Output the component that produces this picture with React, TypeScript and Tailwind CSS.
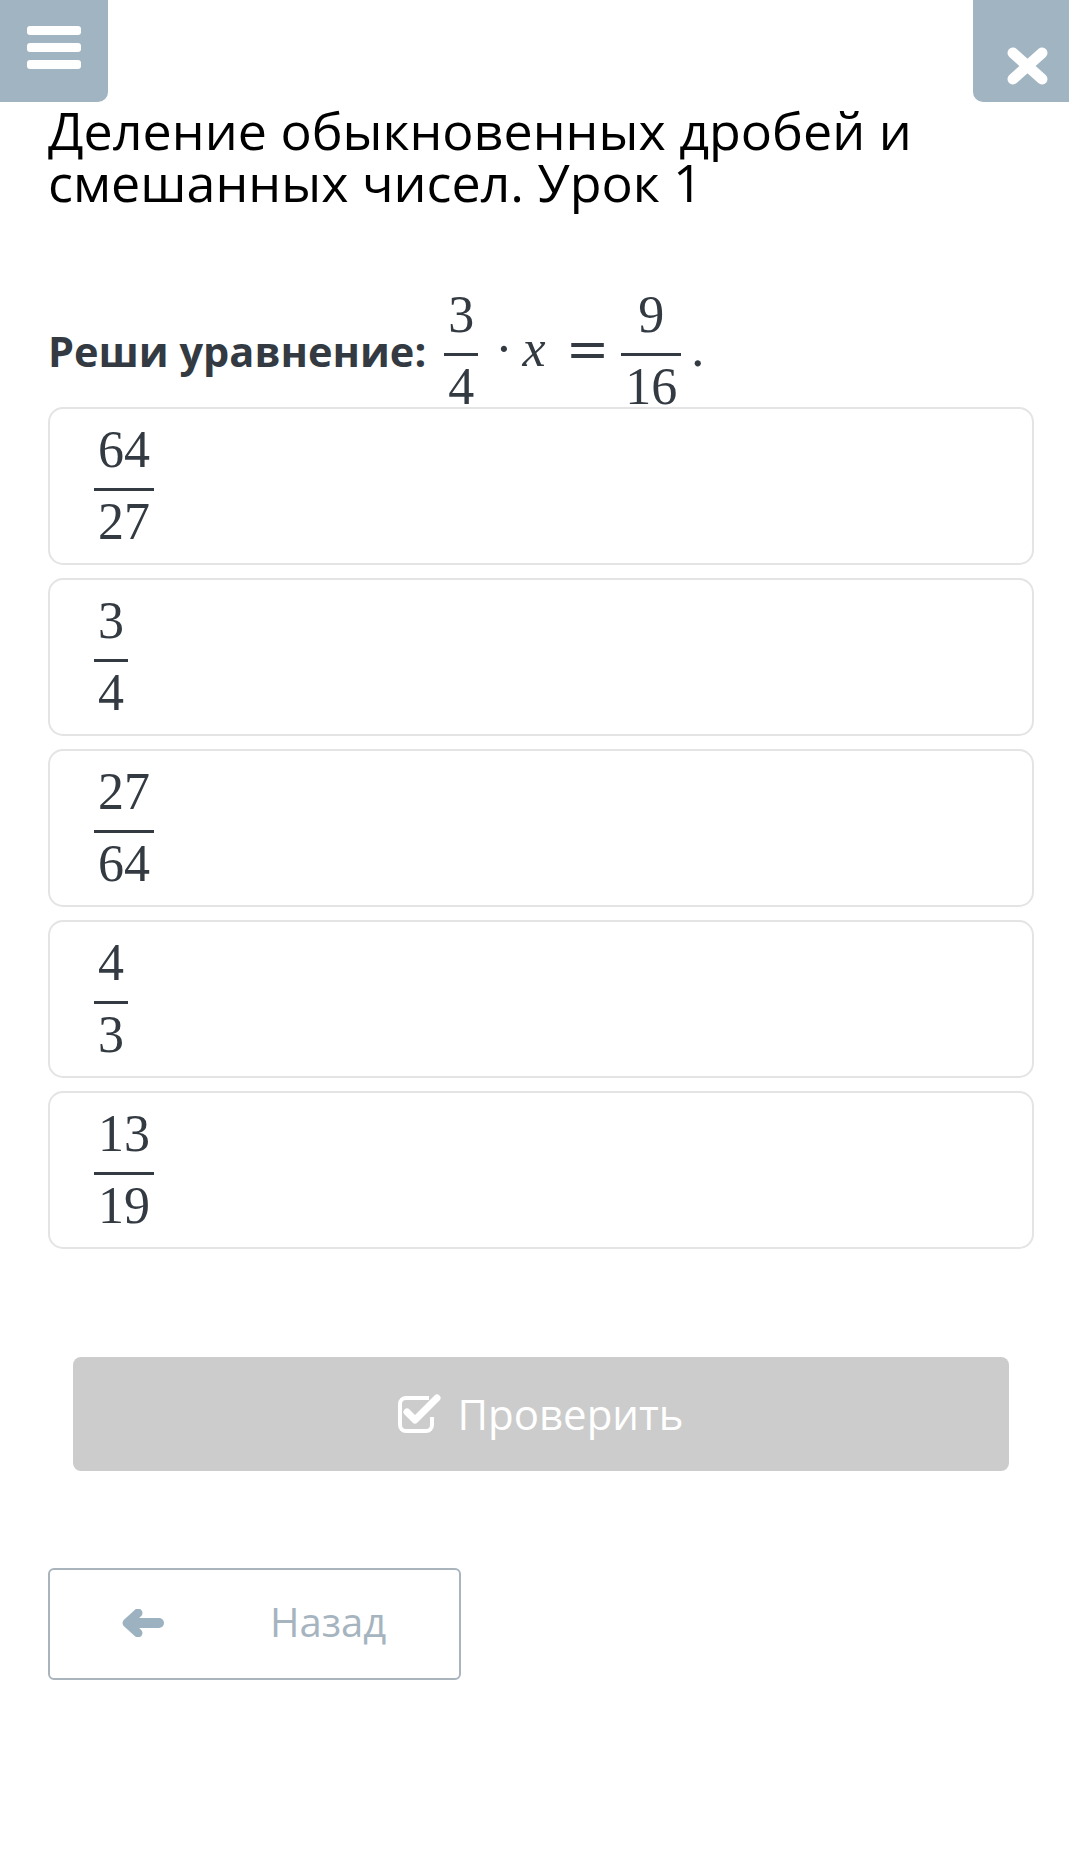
import React from "react";

function Frac({ n, d }: { n: string; d: string }) {
  return (
    <span className="inline-flex flex-col items-stretch">
      <span className="block h-[40px] px-[4px] text-center leading-[40px]">{n}</span>
      <span className="mb-[11px] mt-[18px] block h-[3px] bg-[#333a42]" />
      <span className="block h-[40px] px-[4px] text-center leading-[40px]">{d}</span>
    </span>
  );
}

const options: [string, string][] = [
  ["64", "27"],
  ["3", "4"],
  ["27", "64"],
  ["4", "3"],
  ["13", "19"],
];

export default function App() {
  return (
    <div className="min-h-[1866px] w-full bg-white font-['Open_Sans',sans-serif]">
      {/* header */}
      <div className="flex justify-between">
        <button className="flex h-[102px] w-[108px] flex-col gap-[8px] rounded-br-[10px] bg-[#a1b4c2] pl-[27px] pt-[26px]">
          <span className="block h-[9px] w-[54px] rounded-[3px] bg-white" />
          <span className="block h-[9px] w-[54px] rounded-[3px] bg-white" />
          <span className="block h-[9px] w-[54px] rounded-[3px] bg-white" />
        </button>
        <button className="h-[102px] w-[96px] rounded-bl-[10px] bg-[#a1b4c2] pl-[33px] pt-[30px]">
          <svg width="43" height="38" viewBox="0 0 43 38">
            <path d="M7 6 L36 32 M36 6 L7 32" stroke="white" strokeWidth="11" strokeLinecap="round" />
          </svg>
        </button>
      </div>

      <div className="pl-[48px] pr-[35px]">
        <h1 className="mt-[2px] text-[52px] font-normal leading-[52px] text-black">
          Деление обыкновенных дробей и смешанных чисел. Урок 1
        </h1>

        {/* question */}
        <div className="mt-[87px] flex items-center text-[#333a42]">
          <span className="text-[41.5px] font-bold leading-[48px]">Реши уравнение:</span>
          <div className="ml-[18px] flex items-center font-['Liberation_Serif',serif] text-[52px]">
            <Frac n="3" d="4" />
            <span className="mb-[5px] ml-[17px] leading-[40px]">·</span>
            <span className="mb-[5px] ml-[10px] italic leading-[40px]">x</span>
            <span className="mb-[5px] ml-[20px] font-['DejaVu_Serif',serif] leading-[40px]">=</span>
            <span className="ml-[12px] flex">
              <Frac n="9" d="16" />
            </span>
            <span className="mb-[5px] ml-[10px] leading-[40px]">.</span>
          </div>
        </div>

        {/* options */}
        <div className="flex flex-col gap-[13px]">
          {options.map(([n, d], i) => (
            <div
              key={i}
              className="box-border flex h-[158px] items-start rounded-[15px] border-2 border-[#e4e4e4] pl-[44px] pt-[21px] font-['Liberation_Serif',serif] text-[52px] text-[#333a42]"
            >
              <Frac n={n} d={d} />
            </div>
          ))}
        </div>

        {/* check button */}
        <div className="mt-[108px] px-[25px]">
          <button className="flex h-[114px] w-full items-center justify-center gap-[15px] rounded-[8px] bg-[#cccccc] text-white">
            <svg width="44" height="40" viewBox="0 0 44 40" className="mb-[2px]">
              <path
                d="M31 5 H8 A6 6 0 0 0 2 11 V32 A6 6 0 0 0 8 38 H28 A6 6 0 0 0 34 32 V24"
                fill="none"
                stroke="white"
                strokeWidth="4"
              />
              <path
                d="M9 19 L17 27 L39 5"
                fill="none"
                stroke="white"
                strokeWidth="7"
                strokeLinecap="round"
                strokeLinejoin="round"
              />
            </svg>
            <span className="text-[42px] leading-[56px]">Проверить</span>
          </button>
        </div>

        {/* back button */}
        <button className="mt-[97px] box-border flex h-[112px] w-[413px] items-center rounded-[6px] border-2 border-[#a9b4bc] bg-white pl-[72px]">
          <svg width="42" height="28" viewBox="0 0 42 28" className="mb-[2px]">
            <path d="M15 14 H37" stroke="#9db2c1" strokeWidth="10" strokeLinecap="round" />
            <path
              d="M16 4 L5 14 L16 24"
              fill="none"
              stroke="#9db2c1"
              strokeWidth="9"
              strokeLinecap="round"
              strokeLinejoin="round"
            />
          </svg>
          <span className="ml-[106px] mb-[4px] text-[40px] leading-[52px] text-[#a6b4bf]">Назад</span>
        </button>
      </div>
    </div>
  );
}
